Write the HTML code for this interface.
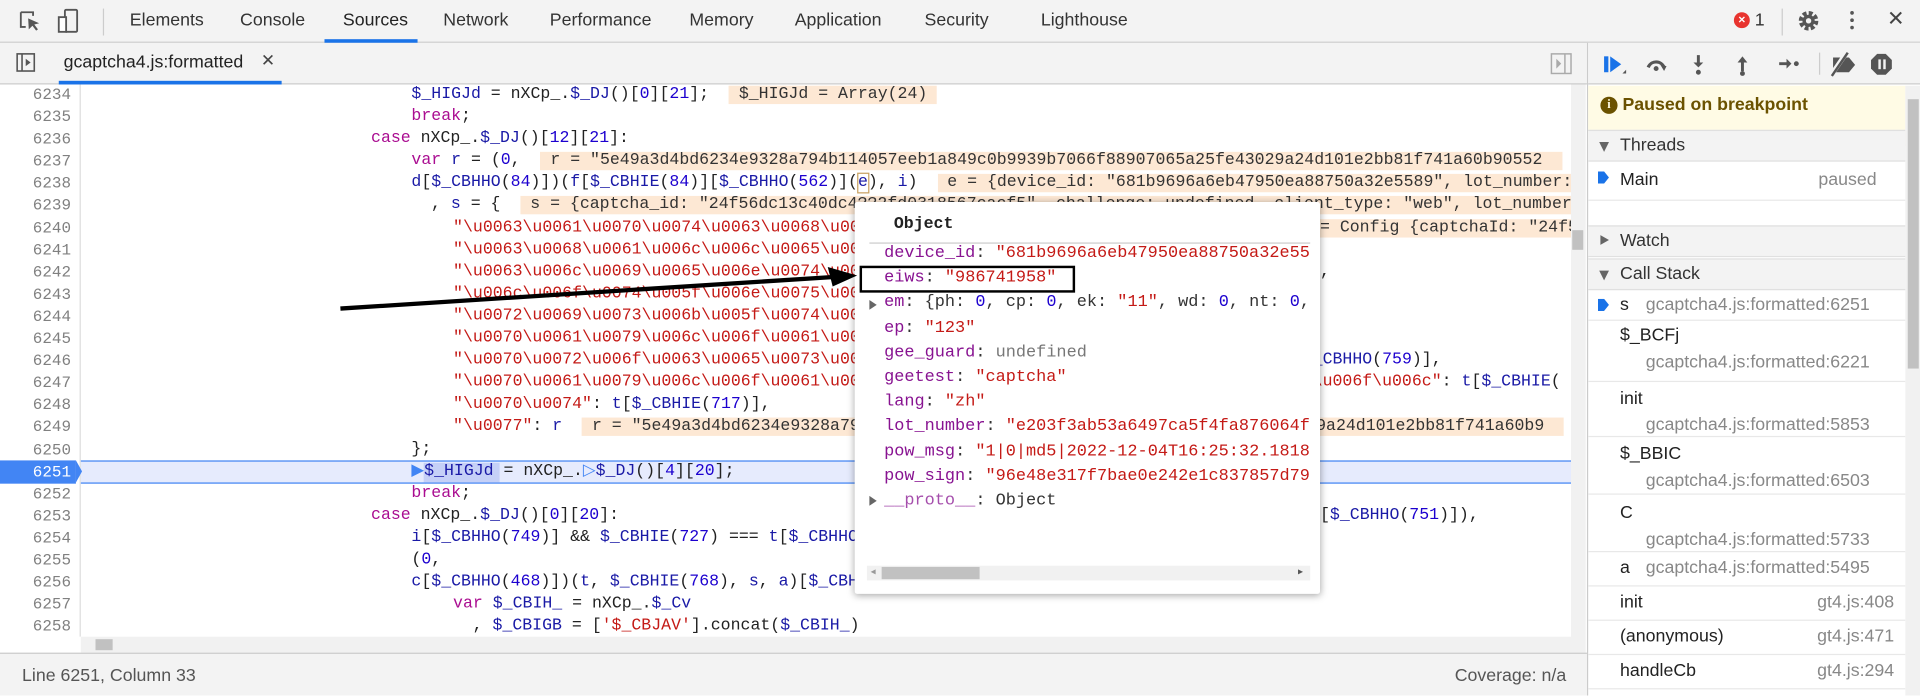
<!DOCTYPE html>
<html><head><meta charset="utf-8"><style>
*{box-sizing:border-box;margin:0;padding:0}
html,body{width:1920px;height:695px;overflow:hidden;background:#fff}
#s{position:absolute;left:0;top:0;width:1568px;height:568px;transform:scale(1.22449);transform-origin:0 0;font-family:"Liberation Sans",sans-serif;color:#333}
.a{position:absolute}
.tb{left:0;top:0;width:1568px;height:35px;background:#f3f3f3;border-bottom:1px solid #cbcbcb}
.tab{position:absolute;top:9px;font-size:14.5px;color:#333}
.bar2{left:0;top:35px;width:1296px;height:34px;background:#f3f3f3;border-bottom:1px solid #cbcbcb}
.ed{left:0;top:69px;width:1283px;height:451px;overflow:hidden;background:#fff}
.ln{position:absolute;left:0;width:58px;text-align:right;font:13px/18.1px "Liberation Mono",monospace;color:#808080}
.cl{position:absolute;left:0;white-space:pre;font:13.5px/18.1px "Liberation Mono",monospace;color:#222}
.k{color:#aa0d91}.b{color:#1a1aa6}.n{color:#1c00cf}.r{color:#c41a16}.p{color:#881391}
.ev{background:#fde8d4;color:#333}
.pop{left:698px;top:165px;width:380px;height:320px;background:#fff;box-shadow:0 1px 6px rgba(0,0,0,.35);border-radius:2px;overflow:hidden}
.pr{position:absolute;left:24px;white-space:pre;font:13.8px/20.2px "Liberation Mono",monospace;color:#333}
.rp{left:1296px;top:35px;width:272px;height:533px;background:#fff;border-left:1px solid #cbcbcb}
.sh{position:absolute;left:0;width:259px;height:26px;background:#f3f3f3;border-bottom:1px solid #e0e0e0;border-top:1px solid #e0e0e0;font-size:14.5px;line-height:24px;padding-left:26px;color:#333}
.sh i{position:absolute;left:9px;top:9px;width:0;height:0;border-left:4.5px solid transparent;border-right:4.5px solid transparent;border-top:8px solid #666}
.sh i.c{left:10px;top:7px;border-top:4.5px solid transparent;border-bottom:4.5px solid transparent;border-left:7px solid #666;border-right:0}
.cs{position:absolute;left:0;width:259px;border-bottom:1px solid #e8e8e8;font-size:14.5px;color:#222}
.cs .f{color:#888}
.st{left:0;top:533px;width:1296px;height:35px;background:#f3f3f3;border-top:1px solid #cbcbcb;font-size:14.5px;color:#555}
</style></head><body><div id="s">

<div class="a tb">
  <svg class="a" style="left:14px;top:8px" width="22" height="20" viewBox="0 0 22 20"><path d="M3 2h10v3M3 2v12h4" fill="none" stroke="#555" stroke-width="1.5"/><path d="M9 7l9 4-4 1 3 4-1.5 1-3-4-3 3z" fill="#555"/></svg>
  <svg class="a" style="left:46px;top:6px" width="22" height="24" viewBox="0 0 22 24"><rect x="7" y="2" width="10" height="18" rx="1" fill="none" stroke="#555" stroke-width="1.5"/><rect x="2" y="8" width="6" height="12" fill="#fff" stroke="#555" stroke-width="1.5"/></svg>
  <div class="a" style="left:84px;top:7px;width:1px;height:22px;background:#ccc"></div>
  <span class="tab" style="left:106px">Elements</span>
  <span class="tab" style="left:196px">Console</span>
  <span class="tab" style="left:280px;color:#222">Sources</span>
  <div class="a" style="left:265px;top:32px;width:76px;height:3px;background:#1a73e8"></div>
  <span class="tab" style="left:362px">Network</span>
  <span class="tab" style="left:449px">Performance</span>
  <span class="tab" style="left:563px">Memory</span>
  <span class="tab" style="left:649px">Application</span>
  <span class="tab" style="left:755px">Security</span>
  <span class="tab" style="left:850px">Lighthouse</span>
  <div class="a" style="left:1416px;top:10px;width:13px;height:13px;border-radius:50%;background:#e8342f;color:#fff;font-size:10px;line-height:13px;text-align:center;font-weight:bold">×</div>
  <span class="tab" style="left:1433px">1</span>
  <div class="a" style="left:1455px;top:7px;width:1px;height:22px;background:#ccc"></div>
  <svg class="a" style="left:1467px;top:7px" width="20" height="20" viewBox="0 0 20 20"><circle cx="10" cy="10" r="6" fill="none" stroke="#555" stroke-width="4" stroke-dasharray="3 1.7"/><circle cx="10" cy="10" r="5" fill="#555"/><circle cx="10" cy="10" r="2.2" fill="#f3f3f3"/></svg>
  <div class="a" style="left:1511px;top:9px;width:3px;height:3px;background:#555;border-radius:50%;box-shadow:0 6px 0 #555,0 12px 0 #555"></div>
  <span class="tab" style="left:1541px;font-size:17px;top:6px;color:#444">✕</span>
</div>

<div class="a bar2">
  <svg class="a" style="left:13px;top:8px" width="16" height="16" viewBox="0 0 16 16"><rect x="1" y="1" width="14" height="14" fill="none" stroke="#555" stroke-width="1.3"/><path d="M5 1v14" stroke="#555" stroke-width="1.3"/><path d="M8 5l4 3-4 3z" fill="#555"/></svg>
  <span class="a" style="left:52px;top:8px;font-size:14.5px;color:#222">gcaptcha4.js:formatted</span>
  <span class="a" style="left:213px;top:6px;font-size:14px;color:#444">✕</span>
  <div class="a" style="left:48px;top:31px;width:182px;height:3px;background:#1a73e8"></div>
  <svg class="a" style="left:1266px;top:8px" width="18" height="18" viewBox="0 0 18 18"><rect x="1" y="1" width="16" height="16" fill="none" stroke="#aaa" stroke-width="1.2"/><path d="M12 1v16" stroke="#aaa" stroke-width="1.2"/><path d="M5 5l4 4-4 4z" fill="#aaa"/></svg>
</div>

<div class="a ed">
  <div class="a" style="left:65px;top:0;width:1px;height:451px;background:#ddd"></div>
  <div class="a" style="left:66px;top:307px;width:1217px;height:19px;background:#e6ebfd;border-top:1px solid #4285f4;border-bottom:1px solid #4285f4"></div>
  <div class="a" style="left:0;top:307px;width:62px;height:19px;background:#4285f4"></div>
  <div class="a" style="left:62px;top:307px;width:0;height:0;border-top:9.5px solid transparent;border-bottom:9.5px solid transparent;border-left:5px solid #4285f4"></div>
  <div class="a" style="left:346px;top:309px;width:62px;height:16px;background:#c5d0f7"></div>

  <div class="ln" style="top:0">6234<br>6235<br>6236<br>6237<br>6238<br>6239<br>6240<br>6241<br>6242<br>6243<br>6244<br>6245<br>6246<br>6247<br>6248<br>6249<br>6250<br><span style="color:#fff">6251</span><br>6252<br>6253<br>6254<br>6255<br>6256<br>6257<br>6258<br>6259</div>

  <div class="cl" style="top:0"><span style="padding-left:336px"></span><span class="b">$_HIGJd</span> = nXCp_.<span class="b">$_DJ</span>()[<span class="n">0</span>][<span class="n">21</span>];  <span class="ev"> $_HIGJd = Array(24) </span>
<span style="padding-left:336px"></span><span class="k">break</span>;
<span style="padding-left:303px"></span><span class="k">case</span> nXCp_.<span class="b">$_DJ</span>()[<span class="n">12</span>][<span class="n">21</span>]:
<span style="padding-left:336px"></span><span class="k">var</span> <span class="b">r</span> = (<span class="n">0</span>,  <span class="ev"> r = "5e49a3d4bd6234e9328a794b114057eeb1a849c0b9939b7066f88907065a25fe43029a24d101e2bb81f741a60b90552  </span>
<span style="padding-left:336px"></span><span class="b">d</span>[<span class="b">$_CBHHO</span>(<span class="n">84</span>)])(<span class="b">f</span>[<span class="b">$_CBHIE</span>(<span class="n">84</span>)][<span class="b">$_CBHHO</span>(<span class="n">562</span>)](<span class="b" style="outline:1px solid #c8a060">e</span>), <span class="b">i</span>)  <span class="ev"> e = {device_id: "681b9696a6eb47950ea88750a32e5589", lot_number: "e203</span>
<span style="padding-left:352px"></span>, <span class="b">s</span> = {  <span class="ev"> s = {captcha_id: "24f56dc13c40dc4??2fd0318567cacf5", challenge: undefined, client_type: "web", lot_number: </span>
<span style="padding-left:370px"></span><span class="r">"\u0063\u0061\u0070\u0074\u0063\u0068\u0061\u005f\u0069\u0064"</span>
<span style="padding-left:370px"></span><span class="r">"\u0063\u0068\u0061\u006c\u006c\u0065\u006e\u0067\u0065"</span>
<span style="padding-left:370px"></span><span class="r">"\u0063\u006c\u0069\u0065\u006e\u0074\u005f\u0074\u0079\u0070\u0065"</span>
<span style="padding-left:370px"></span><span class="r">"\u006c\u006f\u0074\u005f\u006e\u0075\u006d\u0062\u0065\u0072"</span>
<span style="padding-left:370px"></span><span class="r">"\u0072\u0069\u0073\u006b\u005f\u0074\u0079\u0070\u0065"</span>
<span style="padding-left:370px"></span><span class="r">"\u0070\u0061\u0079\u006c\u006f\u0061\u0064"</span>
<span style="padding-left:370px"></span><span class="r">"\u0070\u0072\u006f\u0063\u0065\u0073\u0073\u005f\u0074\u006f"</span>
<span style="padding-left:370px"></span><span class="r">"\u0070\u0061\u0079\u006c\u006f\u0061\u0064\u005f\u0070\u0072"</span>
<span style="padding-left:370px"></span><span class="r">"\u0070\u0074"</span>: <span class="b">t</span>[<span class="b">$_CBHIE</span>(<span class="n">717</span>)],
<span style="padding-left:370px"></span><span class="r">"\u0077"</span>: <span class="b">r</span>  <span class="ev"> r = "5e49a3d4bd6234e9328a794b114057eeb1a849c0b9939b7066f88907065a25fe43029a24d101e2bb81f741a60b9  </span>
<span style="padding-left:336px"></span>};
<span style="padding-left:336px"></span><span style="color:#4285f4">▶</span><span class="b">$_HIGJd</span> = nXCp_.<span style="color:#4285f4">▷</span><span class="b">$_DJ</span>()[<span class="n">4</span>][<span class="n">20</span>];
<span style="padding-left:336px"></span><span class="k">break</span>;
<span style="padding-left:303px"></span><span class="k">case</span> nXCp_.<span class="b">$_DJ</span>()[<span class="n">0</span>][<span class="n">20</span>]:
<span style="padding-left:336px"></span><span class="b">i</span>[<span class="b">$_CBHHO</span>(<span class="n">749</span>)] &amp;&amp; <span class="b">$_CBHIE</span>(<span class="n">727</span>) === <span class="b">t</span>[<span class="b">$_CBHHO</span>(<span class="n">750</span>)] ...
<span style="padding-left:336px"></span>(<span class="n">0</span>,
<span style="padding-left:336px"></span><span class="b">c</span>[<span class="b">$_CBHHO</span>(<span class="n">468</span>)])(<span class="b">t</span>, <span class="b">$_CBHIE</span>(<span class="n">768</span>), <span class="b">s</span>, <span class="b">a</span>)[<span class="b">$_CBHHO</span>(<span class="n">769</span>)]
<span style="padding-left:370px"></span><span class="k">var</span> <span class="b">$_CBIH_</span> = nXCp_.<span class="b">$_Cv</span>
<span style="padding-left:386px"></span>, <span class="b">$_CBIGB</span> = [<span class="r">'$_CBJAV'</span>].concat(<span class="b">$_CBIH_</span>)</div>
  <div class="cl" style="left:1078px;top:108.6px;width:205px;overflow:hidden"><span class="ev">= Config {captchaId: "24f56dc</span></div>
  <div class="cl" style="left:1078px;top:144.8px"><span>,</span></div>
  <div class="cl" style="left:1072px;top:217.2px"><span class="b">_CBHHO</span>(<span class="n">759</span>)],</div>
  <div class="cl" style="left:1072px;top:235.3px"><span class="r">\u006f\u006c"</span>: <span class="b">t</span>[<span class="b">$_CBHIE</span>(</div>
  <div class="cl" style="left:1078px;top:343.9px">[<span class="b">$_CBHHO</span>(<span class="n">751</span>)]),</div>
  <div class="a" style="left:66px;top:451px;width:1217px;height:12px;background:#f1f1f1"></div>
</div>
<div class="a" style="left:66px;top:520px;width:1217px;height:13px;background:#f1f1f1"></div>
<div class="a" style="left:78px;top:522px;width:14px;height:9px;background:#c1c1c1"></div>
<div class="a" style="left:1283px;top:69px;width:12px;height:464px;background:#f1f1f1"></div>
<div class="a" style="left:1284px;top:188px;width:9px;height:16px;background:#c1c1c1"></div>

<div class="a pop">
  <div class="a" style="left:32px;top:11px;font:bold 13.5px 'Liberation Mono',monospace;color:#222">Object</div>
  <div class="a" style="left:12px;top:33px;width:360px;height:1px;background:#ccc"></div>
  <div class="pr" style="top:33px"><span class="p">device_id</span>: <span class="r">"681b9696a6eb47950ea88750a32e5589"</span>
<span class="p">eiws</span>: <span class="r">"986741958"</span>
<span class="p">em</span>: {ph: <span class="n">0</span>, cp: <span class="n">0</span>, ek: <span class="r">"11"</span>, wd: <span class="n">0</span>, nt: <span class="n">0</span>, fp: 0}
<span class="p">ep</span>: <span class="r">"123"</span>
<span class="p">gee_guard</span>: <span style="color:#777">undefined</span>
<span class="p">geetest</span>: <span class="r">"captcha"</span>
<span class="p">lang</span>: <span class="r">"zh"</span>
<span class="p">lot_number</span>: <span class="r">"e203f3ab53a6497ca5f4fa876064f029a24d1</span>
<span class="p">pow_msg</span>: <span class="r">"1|0|md5|2022-12-04T16:25:32.181829"</span>
<span class="p">pow_sign</span>: <span class="r">"96e48e317f7bae0e242e1c837857d79a"</span>
<span class="p" style="opacity:.75">__proto__</span>: Object</div>
  <div class="a" style="left:372px;top:34px;width:8px;height:260px;background:#fff"></div>
  <div class="a" style="left:12px;top:80px;width:0;height:0;border-top:4.5px solid transparent;border-bottom:4.5px solid transparent;border-left:6px solid #666"></div>
  <div class="a" style="left:12px;top:240px;width:0;height:0;border-top:4.5px solid transparent;border-bottom:4.5px solid transparent;border-left:6px solid #666"></div>
  <div class="a" style="left:4px;top:52px;width:176px;height:22px;border:2px solid #000"></div>
  <div class="a" style="left:10px;top:297px;width:362px;height:12px;background:#f1f1f1"></div>
  <div class="a" style="left:22px;top:298px;width:80px;height:10px;background:#c1c1c1"></div>
  <span class="a" style="left:13px;top:297px;font-size:8px;color:#999">◂</span>
  <span class="a" style="left:362px;top:297px;font-size:8px;color:#555">▸</span>
</div>

<svg class="a" style="left:0;top:0" width="1568" height="568"><path d="M278 252 L684 226" stroke="#000" stroke-width="3.5"/><path d="M700 225 L676 218 L680 234 Z" fill="#000"/></svg>

<div class="a rp">
  <div class="a" style="left:0;top:0;width:272px;height:34px;background:#f3f3f3;border-bottom:1px solid #cbcbcb"></div>
  <svg class="a" style="left:10px;top:5px" width="260" height="26" viewBox="0 0 260 26">
    <rect x="3" y="6" width="3.5" height="13" fill="#1a73e8"/><path d="M8 6l9 6.5-9 6.5z" fill="#1a73e8"/><path d="M18 20l3-3v3z" fill="#555"/>
    <path d="M39 15a7 7 0 0 1 13 0" fill="none" stroke="#555" stroke-width="2.6"/><path d="M49 13l5 1-2 4z" fill="#555"/><circle cx="45.5" cy="16" r="2" fill="#555"/>
    <path d="M80 5v8" stroke="#555" stroke-width="2.4"/><path d="M76 11l4 4 4-4z" fill="#555"/><circle cx="80" cy="19" r="2" fill="#555"/>
    <path d="M116 10v8" stroke="#555" stroke-width="2.4"/><path d="M112 11l4-5 4 5z" fill="#555"/><circle cx="116" cy="20" r="2" fill="#555"/>
    <path d="M146 12h7" stroke="#555" stroke-width="2.4"/><path d="M152 8l4 4-4 4z" fill="#555"/><circle cx="160" cy="12" r="2" fill="#555"/>
    <path d="M179 3v18" stroke="#ccc"/>
    <path d="M190 7h13l5 6-5 6h-13z" fill="#555"/><path d="M188 22L201 3" stroke="#f3f3f3" stroke-width="4"/><path d="M189 22L202 3" stroke="#555" stroke-width="2"/>
    <path d="M226 4h7l5 5v7l-5 5h-7l-5-5v-7z" fill="#555"/><rect x="227" y="8.5" width="2" height="8" fill="#f3f3f3"/><rect x="231" y="8.5" width="2" height="8" fill="#f3f3f3"/>
  </svg>
  <div class="a" style="left:0;top:35px;width:259px;height:49px;background:#fffbe5;border-bottom:1px solid #e0e0e0"></div>
  <div class="a" style="left:10px;top:44px;width:14px;height:14px;border-radius:50%;background:#6b5200;color:#fffbe5;font:bold 10px/14px 'Liberation Serif',serif;text-align:center">i</div>
  <div class="a" style="left:28px;top:43px;font-size:14.5px;font-weight:bold;color:#6b5200">Paused on breakpoint</div>
  <div class="sh" style="top:71px"><i></i>Threads</div>
  <div class="cs" style="top:97px;height:32px"><span class="a" style="left:8px;top:8px;width:9px;height:10px;background:#1a73e8;clip-path:polygon(0 0,55% 0,100% 50%,55% 100%,0 100%)"></span><span class="a" style="left:26px;top:7px">Main</span><span class="a f" style="left:188px;top:7px">paused</span></div>
  <div class="sh" style="top:149px"><i class="c"></i>Watch</div>
  <div class="sh" style="top:176px"><i></i>Call Stack</div>
  <div class="cs" style="top:202px;height:25px"><span class="a" style="left:8px;top:7px;width:9px;height:10px;background:#1a73e8;clip-path:polygon(0 0,55% 0,100% 50%,55% 100%,0 100%)"></span><span class="a" style="left:26px;top:4px">s</span><span class="a f" style="left:47px;top:4px">gcaptcha4.js:formatted:6251</span></div>
  <div class="cs" style="top:227px;height:50px"><span class="a" style="left:26px;top:4px">$_BCFj</span><span class="a f" style="left:47px;top:26px">gcaptcha4.js:formatted:6221</span></div>
  <div class="cs" style="top:277px;height:45px"><span class="a" style="left:26px;top:6px">init</span><span class="a f" style="left:47px;top:27px">gcaptcha4.js:formatted:5853</span></div>
  <div class="cs" style="top:322px;height:47px"><span class="a" style="left:26px;top:6px">$_BBIC</span><span class="a f" style="left:47px;top:28px">gcaptcha4.js:formatted:6503</span></div>
  <div class="cs" style="top:369px;height:47px"><span class="a" style="left:26px;top:7px">C</span><span class="a f" style="left:47px;top:29px">gcaptcha4.js:formatted:5733</span></div>
  <div class="cs" style="top:416px;height:28px"><span class="a" style="left:26px;top:5px">a</span><span class="a f" style="left:47px;top:5px">gcaptcha4.js:formatted:5495</span></div>
  <div class="cs" style="top:444px;height:28px"><span class="a" style="left:26px;top:5px">init</span><span class="a f" style="left:187px;top:5px">gt4.js:408</span></div>
  <div class="cs" style="top:472px;height:28px"><span class="a" style="left:26px;top:5px">(anonymous)</span><span class="a f" style="left:187px;top:5px">gt4.js:471</span></div>
  <div class="cs" style="top:500px;height:28px"><span class="a" style="left:26px;top:5px">handleCb</span><span class="a f" style="left:187px;top:5px">gt4.js:294</span></div>
  <div class="a" style="left:259px;top:35px;width:13px;height:498px;background:#f1f1f1"></div>
  <div class="a" style="left:261px;top:46px;width:9px;height:220px;background:#c1c1c1"></div>
</div>

<div class="a st"><span class="a" style="left:18px;top:10px">Line 6251, Column 33</span><span class="a" style="left:1188px;top:10px">Coverage: n/a</span></div>
</div></body></html>
